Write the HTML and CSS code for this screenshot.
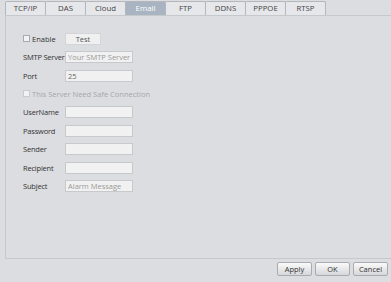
FILE: index.html
```html
<!DOCTYPE html>
<html lang="en">
<head>
    <meta charset="UTF-8">
    <title>Email Settings</title>
    <link rel="stylesheet" href="styles.css">
</head>
<body>
    <div class="tabs">
        <div class="tab">TCP/IP</div>
        <div class="tab">DAS</div>
        <div class="tab">Cloud</div>
        <div class="tab active">Email</div>
        <div class="tab">FTP</div>
        <div class="tab">DDNS</div>
        <div class="tab">PPPOE</div>
        <div class="tab">RTSP</div>
    </div>

    <div class="panel">
        <div class="enable-row">
            <label class="check"><span class="box"></span>Enable</label>
            <button class="test-btn">Test</button>
        </div>

        <div class="form-row">
            <label>SMTP Server</label>
            <input type="text" placeholder="Your SMTP Server">
        </div>
        <div class="form-row">
            <label>Port</label>
            <input type="text" value="25">
        </div>
        <div class="form-row">
            <label class="check disabled"><span class="box"></span>This Server Need Safe Connection</label>
        </div>
        <div class="form-row">
            <label>UserName</label>
            <input type="text">
        </div>
        <div class="form-row">
            <label>Password</label>
            <input type="password">
        </div>
        <div class="form-row">
            <label>Sender</label>
            <input type="text">
        </div>
        <div class="form-row">
            <label>Recipient</label>
            <input type="text">
        </div>
        <div class="form-row">
            <label>Subject</label>
            <input type="text" placeholder="Alarm Message">
        </div>
    </div>

    <div class="footer">
        <button class="btn">Apply</button>
        <button class="btn">OK</button>
        <button class="btn">Cancel</button>
    </div>
</body>
</html>
```

FILE: styles.css
```css
* {
    margin: 0;
    padding: 0;
    box-sizing: border-box;
}

body {
    font-family: 'Open Sans', 'Liberation Sans', sans-serif;
    font-size: 7.5px;
    background: #dcdde1;
    color: #333;
    width: 391px;
    height: 282px;
    overflow: hidden;
    white-space: nowrap;
}

.tabs {
    display: flex;
    padding: 1px 0 0 5px;
    height: 15px;
}

.tab {
    width: 41px;
    height: 14px;
    line-height: 12px;
    text-align: center;
    background: #e6e7ea;
    border: 1px solid #b4b6ba;
    border-bottom: none;
    border-radius: 2px 2px 0 0;
    margin-right: -1px;
    color: #444;
    font-size: 7.8px;
}

.tab.active {
    background: #a9b4c2;
    color: #fff;
}

.panel {
    margin-left: 5px;
    height: 244px;
    border: 1px solid #c6c8cc;
    border-right: none;
    padding: 16px 0 0 17px;
}

.enable-row {
    display: flex;
    align-items: center;
    height: 13px;
    margin-bottom: 3px;
}

.enable-row .check {
    width: 42px;
}

.check {
    display: flex;
    align-items: center;
    gap: 2px;
}

.check .box {
    width: 7px;
    height: 7px;
    border: 1px solid #a8aaae;
    background: #f2f2f2;
}

.check.disabled {
    color: #a4a6aa;
}

.check.disabled .box {
    border-color: #c8cacd;
}

.test-btn {
    width: 36px;
    height: 12px;
    font-family: inherit;
    font-size: 7.5px;
    color: #555;
    background: #f0f0f0;
    border: 1px solid #d4d5d8;
}

.form-row {
    display: flex;
    align-items: center;
    height: 18.4px;
}

.form-row > label:not(.check) {
    width: 42px;
    letter-spacing: -0.2px;
}

.form-row input {
    width: 68px;
    height: 12px;
    font-family: inherit;
    font-size: 7.5px;
    color: #666;
    background: #f1f1f1;
    border: 1px solid #c8c9cc;
    padding: 0 2px;
    outline: none;
}

.form-row input::placeholder {
    color: #9a9a9a;
}

.footer {
    display: flex;
    justify-content: flex-end;
    gap: 3px;
    padding: 3px 3px 0 0;
}

.btn {
    width: 35px;
    height: 14px;
    font-family: inherit;
    font-size: 7.5px;
    color: #333;
    background: linear-gradient(#fafafa, #d6d7da);
    border: 1px solid #a9abae;
    border-radius: 2px;
}
```
